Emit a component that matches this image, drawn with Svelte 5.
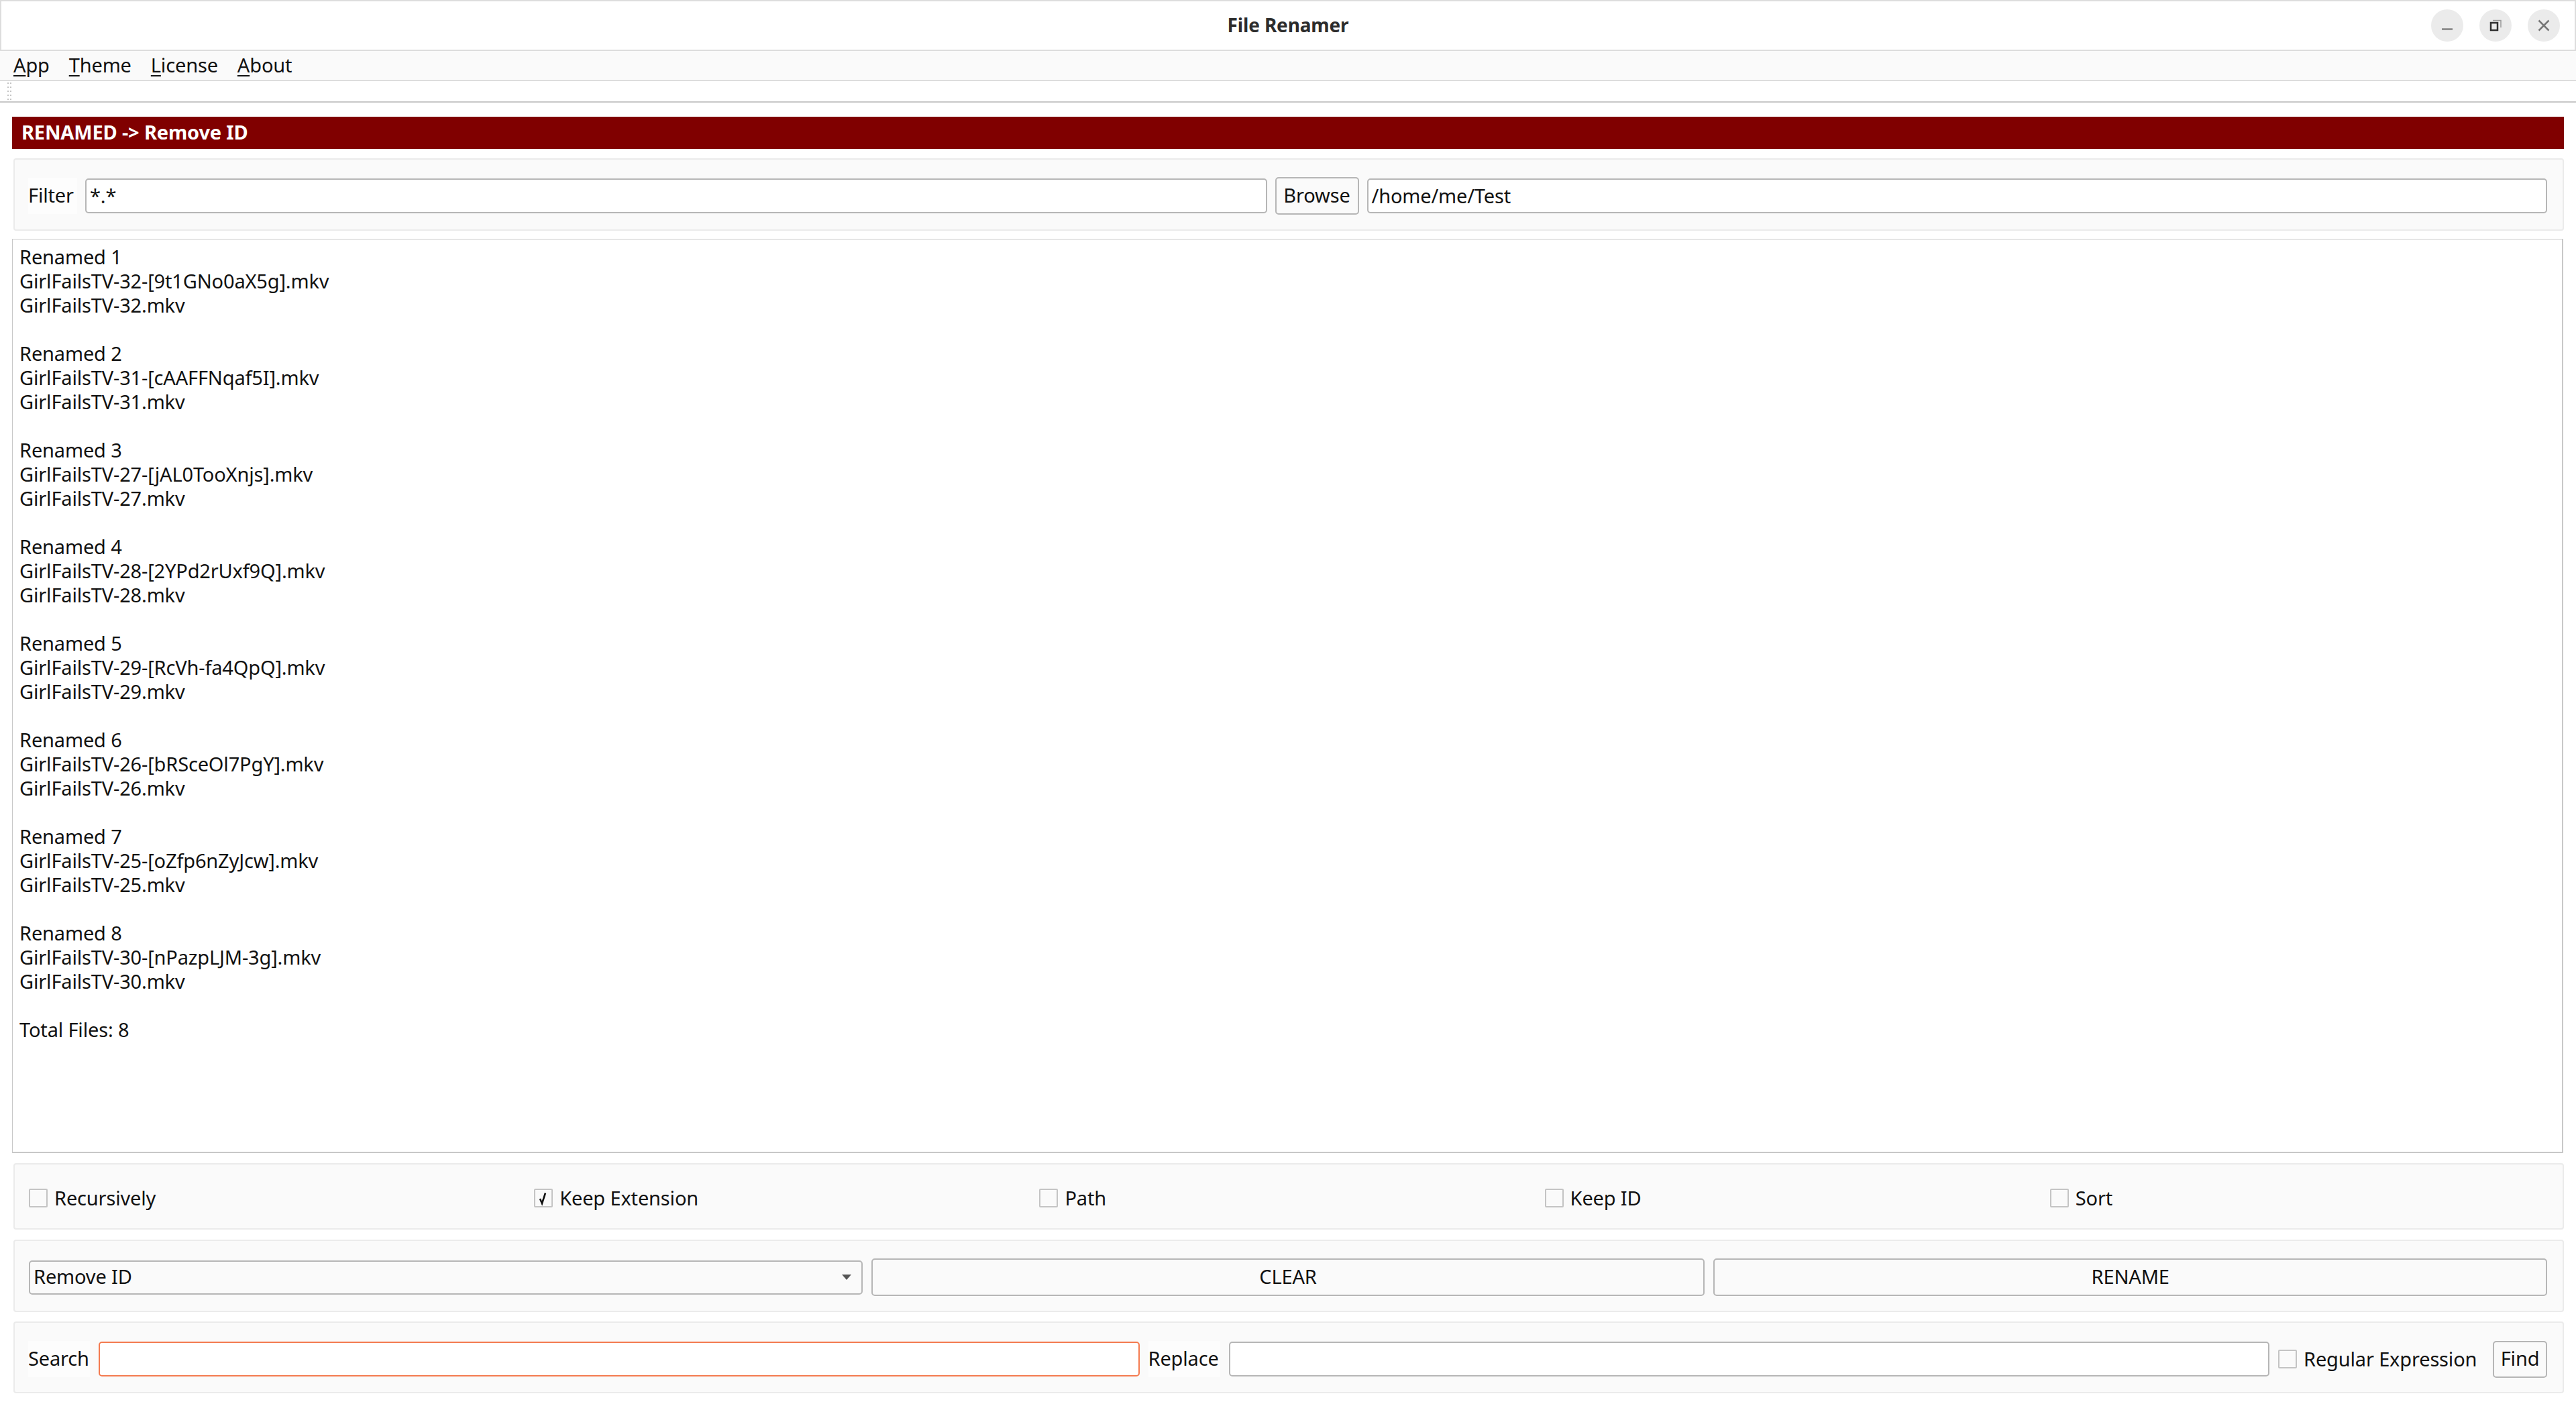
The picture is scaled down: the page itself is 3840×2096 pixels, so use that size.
<script>
  const menus = [['A','pp'],['T','heme'],['L','icense'],['A','bout']];
  const files = [
    ['GirlFailsTV-32-[9t1GNo0aX5g].mkv','GirlFailsTV-32.mkv'],
    ['GirlFailsTV-31-[cAAFFNqaf5I].mkv','GirlFailsTV-31.mkv'],
    ['GirlFailsTV-27-[jAL0TooXnjs].mkv','GirlFailsTV-27.mkv'],
    ['GirlFailsTV-28-[2YPd2rUxf9Q].mkv','GirlFailsTV-28.mkv'],
    ['GirlFailsTV-29-[RcVh-fa4QpQ].mkv','GirlFailsTV-29.mkv'],
    ['GirlFailsTV-26-[bRSceOl7PgY].mkv','GirlFailsTV-26.mkv'],
    ['GirlFailsTV-25-[oZfp6nZyJcw].mkv','GirlFailsTV-25.mkv'],
    ['GirlFailsTV-30-[nPazpLJM-3g].mkv','GirlFailsTV-30.mkv']
  ];
  const opts = [['Recursively',false],['Keep Extension',true],['Path',false],['Keep ID',false],['Sort',false]];
</script>

<div class="win">
  <header class="title">
    <span class="name">File Renamer</span>
    <div class="wbtns">
      <button class="wb" aria-label="Minimize"><svg width="24" height="24" viewBox="0 0 24 24"><path d="M4 17.500H20" stroke="#808080" stroke-width="2.500" fill="none"/></svg></button>
      <button class="wb" aria-label="Restore"><svg width="24" height="24" viewBox="0 0 24 24"><path d="M8 4.500H20V15" stroke="#999" stroke-width="1.500" fill="none"/><rect x="5" y="8" width="10" height="11" stroke="#303030" stroke-width="2.500" fill="#ebebeb"/></svg></button>
      <button class="wb" aria-label="Close"><svg width="24" height="24" viewBox="0 0 24 24"><path d="M4.500 4.500L19.500 19.500M19.500 4.500L4.500 19.500" stroke="#777" stroke-width="2.500" fill="none"/></svg></button>
    </div>
  </header>
  <nav class="menu">
    {#each menus as m}
      <span class="mi"><u>{m[0]}</u>{m[1]}</span>
    {/each}
  </nav>
  <div class="tool"><i class="grip"></i></div>

  <main>
    <div class="banner">RENAMED -&gt; Remove ID</div>

    <section class="panel filter">
      <span class="lab w-filter">Filter</span>
      <div class="inp grow">*.*</div>
      <button class="btn browse">Browse</button>
      <div class="inp grow2">/home/me/Test</div>
    </section>

    <div class="log">
      {#each files as f, i}
        <p>Renamed {i + 1}</p>
        <p>{f[0]}</p>
        <p>{f[1]}</p>
        <p class="blank">&nbsp;</p>
      {/each}
      <p>Total Files: 8</p>
    </div>

    <section class="panel opts">
      {#each opts as o}
        <label class="chk"><span class="box">{#if o[1]}<svg width="24" height="24" viewBox="0 0 24 24"><path d="M7 13L10 20L15 4.500" stroke="#111" stroke-width="2.600" fill="none"/></svg>{/if}</span>{o[0]}</label>
      {/each}
    </section>

    <section class="panel actions">
      <div class="combo">Remove ID<svg class="arrow" width="14" height="10" viewBox="0 0 14 10"><path d="M0 1H14L7 9Z" fill="#555"/></svg></div>
      <button class="btn">CLEAR</button>
      <button class="btn">RENAME</button>
    </section>

    <section class="panel search">
      <span class="lab w-search">Search</span>
      <div class="inp s1 focus"></div>
      <span class="lab w-replace">Replace</span>
      <div class="inp s1"></div>
      <label class="chk rx"><span class="box"></span>Regular Expression</label>
      <button class="btn find">Find</button>
    </section>
  </main>
</div>

<style>
  :global(body) { margin: 0; background: #fff; }
  .win {
    width: 3840px; height: 2096px; overflow: hidden; display: flex; flex-direction: column;
    font-family: "Noto Sans", sans-serif; font-size: 29px; color: #111; letter-spacing: -0.16px;
    box-sizing: border-box;
  }
  .title {
    height: 76px; box-sizing: border-box; border: 2px solid #ddd; display: flex; align-items: center;
    justify-content: center; position: relative; background: #fff;
  }
  .name { font-weight: 700; color: #2c2c2c; font-size: 28px; margin-top: -2px; }
  .wbtns { position: absolute; right: 22px; top: 12px; display: flex; gap: 24px; }
  .wb { width: 48px; height: 48px; border: 0; border-radius: 50%; background: #ebebeb; padding: 0; display: flex; align-items: center; justify-content: center; }
  .menu { height: 45px; box-sizing: border-box; background: #fafafa; border-bottom: 2px solid #ddd; padding: 0 0 2px 20px; display: flex; align-items: center; gap: 29px; }
  .mi u { text-underline-offset: 4px; text-decoration-thickness: 2px; }
  .tool { height: 32px; box-sizing: border-box; border-bottom: 2px solid #c8c8c8; padding-left: 10px; background: #fff; }
  .grip { display: block; width: 8px; height: 32px; background-image: radial-gradient(circle, #c4c4c4 1.2px, transparent 1.4px); background-size: 4px 6px; }
  main { flex: 1; display: flex; flex-direction: column; padding: 21px 18px 0; }
  .banner { height: 48px; background: #800000; color: #fff; font-weight: 700; line-height: 46px; padding-left: 14px; }
  .panel { background: #fafafa; border: 2px solid #ebebeb; border-radius: 4px; box-sizing: border-box; margin-left: 2px; }
  .filter { height: 108px; margin-top: 14px; display: flex; align-items: center; padding: 4px 23px 0 20px; gap: 12px; }
  .lab { background: #fdfdfd; height: 54px; line-height: 52px; flex: none; }
  .w-filter { width: 73px; }
  .w-search { width: 92px; }
  .w-replace { width: 107px; }
  .inp { height: 52px; box-sizing: border-box; border: 2.500px solid #b6b6b6; border-radius: 5px; background: #fff; line-height: 47px; padding-left: 5px; min-width: 0; }
  .grow { flex: 1761; }
  .grow2 { flex: 1759; }
  .btn { font: inherit; letter-spacing: inherit; color: inherit; height: 56px; box-sizing: border-box; border: 2.500px solid #b6b6b6; border-radius: 5px; background: #fafafa; padding: 0 0 3px; }
  .browse { width: 125px; flex: none; }
  .log { height: 1363px; box-sizing: border-box; margin-top: 12px; margin-right: 1px; border: 2px solid #c8c8c8; border-width: 1.500px 2px 2.500px 1.500px; background: #fff; padding: 8px 0 0 10px; }
  .log p { margin: 0; height: 36px; line-height: 36px; }
  .opts { height: 99px; margin-top: 15px; display: grid; grid-template-columns: repeat(5, 1fr); gap: 12px; align-items: center; padding: 5px 23px 0 21px; }
  .chk { display: flex; align-items: center; gap: 10px; line-height: 32px; }
  .box { width: 28px; height: 28px; box-sizing: border-box; border: 2px solid #c4c4c4; border-radius: 2px; background: #fafafa; display: flex; align-items: center; justify-content: center; flex: none; }
  .actions { height: 108px; margin-top: 15px; display: grid; grid-template-columns: repeat(3, 1fr); gap: 13px; align-items: center; padding: 4px 23px 0 21px; }
  .combo { height: 51px; box-sizing: border-box; border: 2.500px solid #b6b6b6; border-radius: 5px; background: #fafafa; padding-left: 5px; line-height: 44px; position: relative; }
  .arrow { position: absolute; right: 15px; top: 18px; }
  .search { height: 107px; margin-top: 14px; display: flex; align-items: center; padding: 5px 23px 0 20px; gap: 13px; }
  .s1 { flex: 1; }
  .focus { border-color: #f47b50; }
  .rx { flex: none; width: 307px; }
  .find { width: 81px; flex: none; height: 55px; }
</style>
